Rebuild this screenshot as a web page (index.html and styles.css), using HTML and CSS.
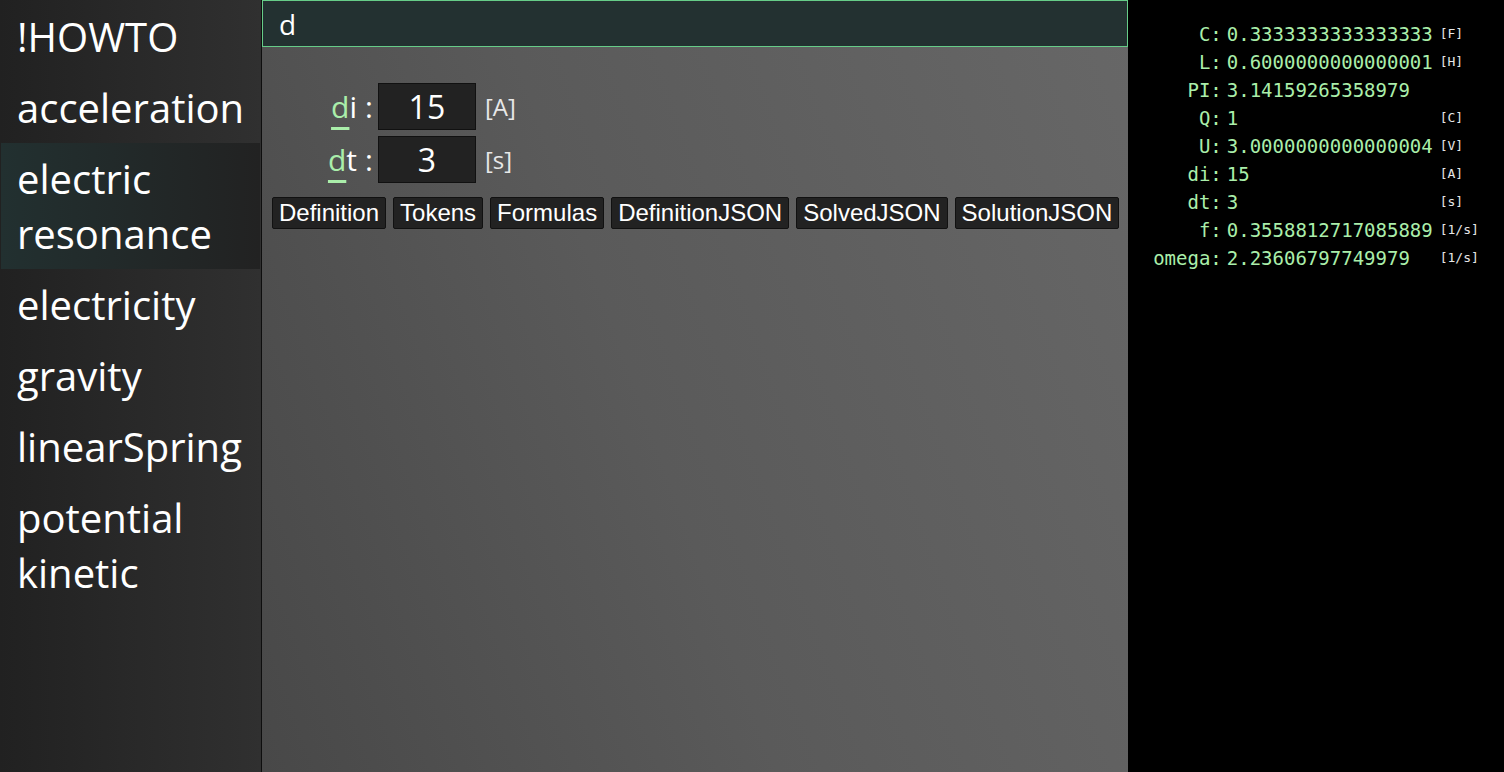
FILE: index.html
```html
<!DOCTYPE html>
<html>
<head>
<meta charset="utf-8">
<link rel="stylesheet" href="styles.css">
</head>
<body>
<div class="app">
  <nav class="sidebar">
    <div class="item">!HOWTO</div>
    <div class="item">acceleration</div>
    <div class="item active">electric resonance</div>
    <div class="item">electricity</div>
    <div class="item">gravity</div>
    <div class="item">linearSpring</div>
    <div class="item">potential kinetic</div>
  </nav>
  <main class="main">
    <input class="search" type="text" value="d">
    <div class="vars">
      <div class="row">
        <span class="label"><span class="hl">d</span>i</span><span class="colon">:</span><input class="val" type="text" value="15"><span class="unit">[A]</span>
      </div>
      <div class="row">
        <span class="label"><span class="hl">d</span>t</span><span class="colon">:</span><input class="val" type="text" value="3"><span class="unit">[s]</span>
      </div>
    </div>
    <div class="buttons">
      <button class="btn">Definition</button>
      <button class="btn">Tokens</button>
      <button class="btn">Formulas</button>
      <button class="btn">DefinitionJSON</button>
      <button class="btn">SolvedJSON</button>
      <button class="btn">SolutionJSON</button>
    </div>
  </main>
  <aside class="panel">
    <div class="table">
      <span class="k">C:</span><span class="v">0.3333333333333333</span><span class="u">[F]</span>
      <span class="k">L:</span><span class="v">0.6000000000000001</span><span class="u">[H]</span>
      <span class="k">PI:</span><span class="v">3.14159265358979</span><span class="u"></span>
      <span class="k">Q:</span><span class="v">1</span><span class="u">[C]</span>
      <span class="k">U:</span><span class="v">3.0000000000000004</span><span class="u">[V]</span>
      <span class="k">di:</span><span class="v">15</span><span class="u">[A]</span>
      <span class="k">dt:</span><span class="v">3</span><span class="u">[s]</span>
      <span class="k">f:</span><span class="v">0.3558812717085889</span><span class="u">[1/s]</span>
      <span class="k">omega:</span><span class="v">2.23606797749979</span><span class="u">[1/s]</span>
    </div>
  </aside>
</div>
</body>
</html>
```

FILE: styles.css
```css
html, body {
  margin: 0;
  padding: 0;
  height: 100%;
}
body {
  background: #000;
  font-family: "Open Sans", "Noto Sans", sans-serif;
  color: #fff;
}
.app {
  display: flex;
  height: 772px;
  width: 1504px;
  overflow: hidden;
}
.sidebar {
  width: 261px;
  flex: none;
  border-right: 1px solid #0e0e0e;
  background: linear-gradient(to right, #212121, #303030);
  padding-top: 1px;
  box-sizing: content-box;
}
.item {
  margin: 0 1px;
  padding: 8px 6px 8px 16px;
  font-size: 40px;
  line-height: 55px;
  color: #fff;
}
.item.active {
  background: linear-gradient(to right, #223030, #222222);
}
.main {
  width: 866px;
  flex: none;
  background: linear-gradient(70deg, #484848 0%, #5a5a5a 45%, #676767 100%);
  display: flex;
  flex-direction: column;
}
.search {
  box-sizing: border-box;
  width: 866px;
  height: 47px;
  margin: 0;
  background: #233131;
  border: 1px solid #66cc88;
  color: #fff;
  font-family: "Open Sans", sans-serif;
  font-size: 28px;
  padding: 0 16px;
  outline: none;
}
.vars {
  margin-top: 36px;
  padding-left: 10px;
  display: flex;
  flex-direction: column;
  gap: 6px;
}
.row {
  display: flex;
  align-items: center;
}
.label {
  width: 85px;
  text-align: right;
  font-size: 30px;
  color: #fff;
}
.hl {
  color: #aaeeaa;
  text-decoration: underline;
  text-decoration-thickness: 3px;
  text-underline-offset: 9px;
  text-decoration-color: #aaeeaa;
}
.colon {
  font-size: 30px;
  margin: 0 5px 0 8px;
  color: #fff;
}
.val {
  box-sizing: border-box;
  width: 98px;
  height: 47px;
  margin: 0;
  padding: 0 2px;
  background: #222;
  border: 1px solid #111;
  color: #fff;
  font-family: "Open Sans", sans-serif;
  font-size: 32px;
  text-align: center;
  outline: none;
}
.unit {
  margin-left: 9px;
  font-size: 24px;
  color: #e8e8e8;
}
.buttons {
  margin-top: 14px;
  padding-left: 10px;
  display: flex;
  gap: 7px;
}
.btn {
  font-family: "Liberation Sans", Arial, sans-serif;
  font-size: 24px;
  line-height: normal;
  padding: 1px 6px;
  background: #222;
  color: #fff;
  border: 1px solid #111;
  border-radius: 2px;
}
.panel {
  flex: 1;
  background: #000;
  padding-top: 20px;
  display: flex;
  justify-content: center;
  align-items: flex-start;
}
.table {
  display: grid;
  grid-template-columns: auto auto auto;
  column-gap: 5px;
  font-family: "DejaVu Sans Mono", "Liberation Mono", monospace;
  font-size: 19px;
  line-height: 28px;
}
.k {
  text-align: right;
  color: #aaeeaa;
}
.v {
  color: #aaeeaa;
  margin-right: 2px;
}
.u {
  font-size: 13px;
  color: #e6e6e6;
}
```
